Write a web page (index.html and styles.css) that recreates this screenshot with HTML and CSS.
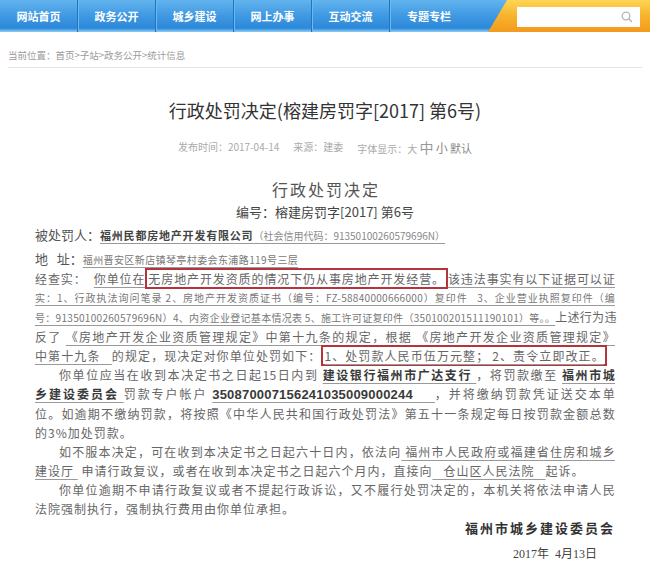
FILE: index.html
```html
<!DOCTYPE html>
<html lang="zh-CN">
<head>
    <meta charset="UTF-8">
    <meta name="viewport" content="width=device-width, initial-scale=1.0">
    <title>行政处罚决定(榕建房罚字[2017] 第6号)</title>
    <link rel="stylesheet" href="styles.css">
</head>
<body>
    <div class="page">
        <div class="nav">
            <a class="nav-item">网站首页</a>
            <a class="nav-item">政务公开</a>
            <a class="nav-item">城乡建设</a>
            <a class="nav-item">网上办事</a>
            <a class="nav-item">互动交流</a>
            <a class="nav-item last">专题专栏</a>
            <div class="search-area">
                <div class="search-box">
                    <svg width="12" height="12" viewBox="0 0 12 12">
                        <circle cx="5" cy="5" r="3.8" fill="none" stroke="#b5b5b5" stroke-width="1.3"/>
                        <line x1="7.8" y1="7.8" x2="10.8" y2="10.8" stroke="#b5b5b5" stroke-width="1.5"/>
                    </svg>
                </div>
            </div>
        </div>

        <div class="crumb">当前位置：首页&gt;子站&gt;政务公开&gt;统计信息</div>

        <h1 class="title">行政处罚决定(榕建房罚字[2017] 第6号)</h1>
        <div class="meta">
            <span>发布时间：2017-04-14</span>
            <span>来源：建委</span>
            <span>字体显示：大 <b class="fz-m">中</b> <b class="fz-s">小</b> <b class="fz-d">默认</b></span>
        </div>

        <!-- scanned decision document -->
        <div class="doc">
            <div class="doc-title">行政处罚决定</div>
            <div class="doc-no">编号：榕建房罚字[2017] 第6号</div>

            <div class="party">被处罚人：<u class="co">福州民都房地产开发有限公司</u><u class="code">（社会信用代码：91350100260579696N）</u></div>
            <div class="addr">地&nbsp;&nbsp;&nbsp;址：<u class="addr-text">福州晋安区新店镇琴亭村委会东浦路119号三层</u></div>

            <div class="row full">经查实：&nbsp;&nbsp;<u>你单位在</u><span class="box">无房地产开发资质的情况下仍从事房地产开发经营。</span><u>该违法事实有以下证据可以证</u></div>
            <div class="row full small"><u>实：1、行政执法询问笔录 2、房地产开发资质证书（编号：FZ-58840000666000）复印件&nbsp;&nbsp;&nbsp;3、企业营业执照复印件（编</u></div>
            <div class="row full small"><u>号：91350100260579696N）4、内资企业登记基本情况表 5、施工许可证复印件（350100201511190101）等。。</u><span class="norm">上述行为违</span></div>
            <div class="row full">反了&nbsp;<u>《房地产开发企业资质管理规定》中第十九条</u>的规定，根据&nbsp;<u>《房地产开发企业资质管理规定》</u></div>
            <div class="row full box-line"><u>中第十九条&nbsp;&nbsp;&nbsp;</u>的规定，现决定对你单位处罚如下：<span class="box"><u>1、处罚款人民币伍万元整；&nbsp;2、责令立即改正。</u></span></div>
            <div class="row full indent">你单位应当在收到本决定书之日起15日内到&nbsp;<u class="b">建设银行福州市广达支行&nbsp;</u>，将罚款缴至&nbsp;<u class="b">福州市城</u></div>
            <div class="row full"><u class="b">乡建设委员会&nbsp;</u>罚款专户帐户&nbsp;<u class="acct">350870007156241035009000244&nbsp;&nbsp;&nbsp;&nbsp;</u>，并将缴纳罚款凭证送交本单</div>
            <div class="row full">位。如逾期不缴纳罚款，将按照《中华人民共和国行政处罚法》第五十一条规定每日按罚款金额总数</div>
            <div class="row">的3%加处罚款。</div>
            <div class="row full indent">如不服本决定，可在收到本决定书之日起六十日内，依法向<u>&nbsp;福州市人民政府或福建省住房和城乡</u></div>
            <div class="row"><u>建设厅&nbsp;</u>&nbsp;申请行政复议，或者在收到本决定书之日起六个月内，直接向<u>&nbsp;&nbsp;&nbsp;仓山区人民法院&nbsp;&nbsp;&nbsp;</u>起诉。</div>
            <div class="row full indent">你单位逾期不申请行政复议或者不提起行政诉讼，又不履行处罚决定的，本机关将依法申请人民</div>
            <div class="row">法院强制执行，强制执行费用由你单位承担。</div>

            <div class="sign">福州市城乡建设委员会</div>
            <div class="date">2017年&nbsp;&nbsp;4月13日</div>
        </div>
    </div>
</body>
</html>
```

FILE: styles.css
```css
* {
    margin: 0;
    padding: 0;
    box-sizing: border-box;
}

body {
    font-family: "Noto Sans CJK SC", sans-serif;
    background: #fff;
}

.page {
    width: 650px;
    min-height: 572px;
}

/* top navigation */
.nav {
    display: flex;
    height: 32px;
    background: linear-gradient(to bottom, #62b4ee 0%, #3f98e2 50%, #2c88d9 88%, #8fd0f6 100%);
}

.nav-item {
    flex: none;
    width: 78px;
    display: flex;
    align-items: center;
    justify-content: center;
    color: #fff;
    font-size: 11px;
    font-weight: bold;
    border-right: 1px solid #2373c4;
    box-shadow: 1px 0 0 #6cb9ee;
}

.nav-item.last {
    border-right: none;
    box-shadow: none;
}

.search-area {
    margin-left: auto;
    width: 162px;
    height: 32px;
    background: linear-gradient(to bottom, #fdd655 0%, #f8b22c 50%, #f39a1e 100%);
    clip-path: polygon(19px 0, 100% 0, 100% 100%, 0 100%);
    padding: 7px 0 0 29px;
}

.search-box {
    width: 123px;
    height: 20px;
    background: #fff;
    display: flex;
    align-items: center;
    justify-content: flex-end;
    padding-right: 7px;
}

/* breadcrumb */
.crumb {
    margin: 16px 8px 0;
    padding-bottom: 5px;
    font-size: 9.5px;
    line-height: 14px;
    color: #9a9a9a;
    border-bottom: 1px solid #e4e4e4;
}

.title {
    margin-top: 30px;
    font-size: 18px;
    font-weight: normal;
    line-height: 24px;
    text-align: center;
    color: #333;
}

.meta {
    margin-top: 17px;
    display: flex;
    justify-content: center;
    gap: 14px;
    font-size: 10px;
    line-height: 16px;
    color: #aaa;
}

.meta b {
    font-weight: normal;
}

.fz-m {
    font-size: 14px;
    color: #999;
}

.fz-s {
    font-size: 12px;
    color: #888;
}

.fz-d {
    font-size: 11px;
    color: #888;
}

/* document body */
.doc {
    padding: 0 35px;
    font-size: 12px;
    color: #666;
}

.doc u {
    text-decoration-color: #999;
    text-underline-offset: 3px;
}

.doc-title {
    margin-top: 21px;
    font-size: 16px;
    line-height: 22px;
    letter-spacing: 2px;
    text-indent: 2px;
    text-align: center;
    color: #555;
}

.doc-no {
    margin-top: 3px;
    font-size: 13px;
    line-height: 18px;
    text-align: center;
    color: #444;
}

.party {
    margin-top: 4px;
    font-size: 13px;
    line-height: 20px;
    white-space: nowrap;
    color: #555;
}

.party .co {
    font-size: 11px;
    font-weight: bold;
    letter-spacing: 0.8px;
    color: #444;
}

.party .code {
    font-size: 10px;
    color: #888;
}

.addr {
    margin-top: 4px;
    font-size: 13px;
    line-height: 18px;
    white-space: nowrap;
    color: #555;
}

.addr-text {
    font-size: 10px;
    letter-spacing: 0.4px;
    color: #777;
}

.row {
    line-height: 19px;
    white-space: nowrap;
    letter-spacing: 1px;
}

.row.full {
    text-align: justify;
    text-align-last: justify;
    letter-spacing: 0.3px;
}

.row.small {
    font-size: 10px;
    color: #777;
}

.row.small .norm {
    font-size: 12px;
    color: #666;
}

.row.indent {
    padding-left: 24px;
}

.row.box-line {
    padding-right: 8px;
}

.box {
    border: 2px solid #b3343a;
    padding: 0 1px;
}

.b {
    font-weight: bold;
    color: #3a3a3a;
}

.acct {
    font-family: "Liberation Sans", sans-serif;
    font-size: 13px;
    font-weight: bold;
    letter-spacing: 0.2px;
    color: #3a3a3a;
}

.sign {
    line-height: 20px;
    font-size: 13px;
    font-weight: bold;
    letter-spacing: 2px;
    text-align: right;
    color: #333;
}

.date {
    margin-top: 7px;
    padding-right: 18px;
    font-family: "Liberation Serif", "Noto Sans CJK SC", serif;
    font-size: 12px;
    line-height: 18px;
    text-align: right;
    color: #444;
}
```
